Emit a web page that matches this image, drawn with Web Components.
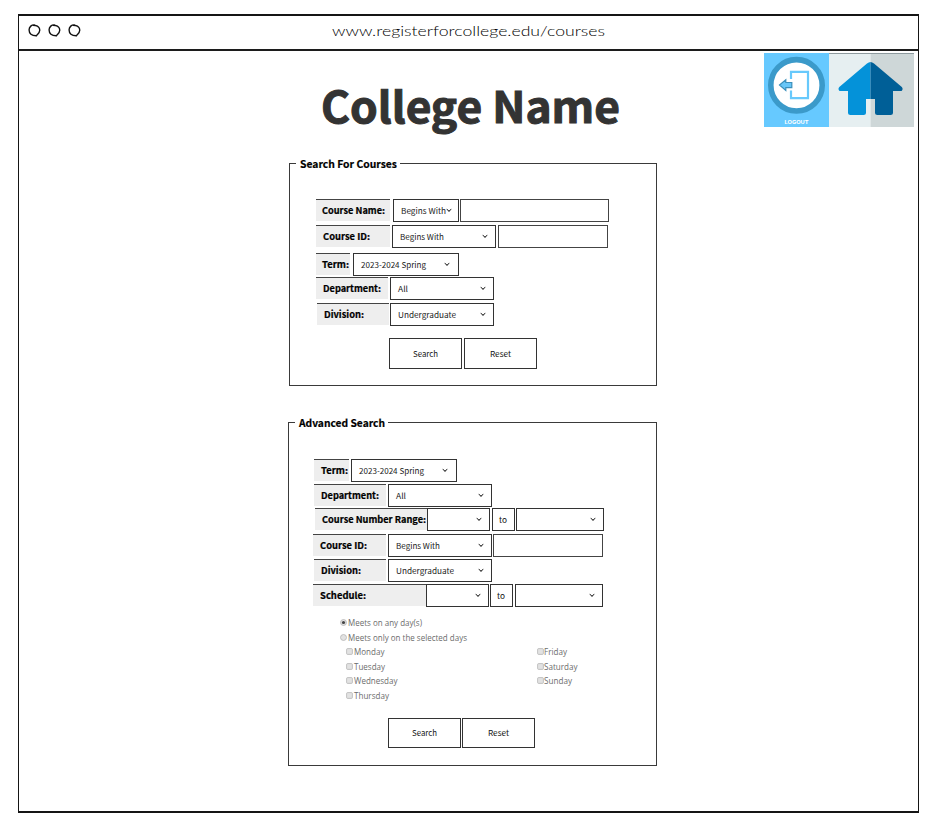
<!DOCTYPE html>
<html lang="en">
<head>
<meta charset="utf-8">
<title>College Name - Courses</title>
<style>
html,body{margin:0;height:100%;background:#fff}
body{font-family:"Noto Sans CJK SC","Source Sans Pro",sans-serif;color:#000;overflow:hidden}
</style>
</head>
<body>
<browser-window url="www.registerforcollege.edu/courses">
  <page-header></page-header>
  <search-panel legend="Search For Courses" lw="97" x="270" y="36" w="368" h="223">
    <form-row y="35" x="26"><field-label w="74" t="Course Name:" tw="63" tx="6"></field-label><select-box gap="3" w="66" t="Begins With" tw="45" cx="53" tx="8"></select-box><text-box gap="1" w="149"></text-box></form-row>
    <form-row y="3" x="26"><field-label w="74" t="Course ID:" tw="47" tx="7"></field-label><select-box gap="2" w="104" t="Begins With" tw="44"></select-box><text-box gap="2" w="110"></text-box></form-row>
    <form-row y="5" x="26"><field-label w="34" t="Term:" tw="27" tx="6"></field-label><select-box gap="3" w="106" t="2023-2024 Spring" tw="65"></select-box></form-row>
    <form-row y="1" x="26"><field-label w="72" t="Department:" tw="58" tx="7"></field-label><select-box gap="2" w="104" t="All" tw="10"></select-box></form-row>
    <form-row y="3" x="27"><field-label w="72" t="Division:" tw="40" tx="6.5"></field-label><select-box gap="1" w="104" t="Undergraduate" tw="58"></select-box></form-row>
    <form-row y="12" x="99"><push-button w="73" h="31" t="Search" tw="25"></push-button><push-button gap="2" w="73" h="31" t="Reset" tw="21"></push-button></form-row>
  </search-panel>
  <search-panel legend="Advanced Search" lw="86" x="269" y="36" w="369" h="344">
    <form-row y="36" x="25"><field-label w="35" t="Term:" tw="27" tx="7"></field-label><select-box gap="2" w="106" t="2023-2024 Spring" tw="65"></select-box></form-row>
    <form-row y="2" x="25"><field-label w="72" t="Department:" tw="58" tx="7"></field-label><select-box gap="2" w="104" t="All" tw="10"></select-box></form-row>
    <form-row y="1" x="26"><field-label w="112" t="Course Number Range:" tw="104" tx="7"></field-label><select-box gap="0" w="63"></select-box><push-button gap="2" w="23" h="23" t="to" tw="8"></push-button><select-box gap="1" w="88"></select-box></form-row>
    <form-row y="3" x="24"><field-label w="73" t="Course ID:" tw="47" tx="7"></field-label><select-box gap="2" w="104" t="Begins With" tw="44"></select-box><text-box gap="1" w="110"></text-box></form-row>
    <form-row y="2" x="25"><field-label w="72" t="Division:" tw="40" tx="7"></field-label><select-box gap="2" w="104" t="Undergraduate" tw="58"></select-box></form-row>
    <form-row y="2" x="24"><field-label w="113" t="Schedule:" tw="46" tx="7"></field-label><select-box gap="0" w="63"></select-box><push-button gap="1" w="23" h="23" t="to" tw="8"></push-button><select-box gap="2" w="88"></select-box></form-row>
    <day-picker></day-picker>
    <form-row y="15" x="99"><push-button w="73" h="30" t="Search" tw="25"></push-button><push-button gap="1" w="73" h="30" t="Reset" tw="21"></push-button></form-row>
  </search-panel>
</browser-window>

<script>
const text = (t, w, o = {}) =>
  `<svg width="${w}" height="${o.h || 12}" style="display:block;overflow:visible;flex:none"><text x="0" y="${o.y || 9}" textLength="${w}" lengthAdjust="spacingAndGlyphs" fill="${o.c || '#000'}" style="font-family:${o.f || 'inherit'};font-size:${o.s || 9}px;font-weight:${o.b || 400};white-space:pre;${o.k ? `stroke:${o.c || '#000'};stroke-width:${o.k}px` : ''}">${t}</text></svg>`;

class Base extends HTMLElement {
  constructor() { super(); this.attachShadow({ mode: 'open' }); }
  a(n, d = 0) { return this.getAttribute(n) ?? d; }
  connectedCallback() { this.shadowRoot.innerHTML = this.view(); }
}
const item = (e, css = '') => `<style>:host{box-sizing:border-box;flex:none;width:${e.a('w')}px;height:${e.a('h', 23)}px;margin-left:${e.a('gap')}px;display:flex;align-items:center;${css}}</style>`;

customElements.define('form-row', class extends Base {
  view() { return `<style>:host{display:flex;align-items:flex-start;margin:${this.a('y')}px 0 0 ${this.a('x')}px}</style><slot></slot>`; }
});
customElements.define('field-label', class extends Base {
  view() { return item(this, `background:#eee;border-top:1px solid #444;padding:0 0 2px ${this.a('tx')}px;height:22px`) + text(this.a('t'), this.a('tw'), { b: 700, s: 9.1, y: 9.6, k: .2 }); }
});
customElements.define('select-box', class extends Base {
  view() {
    const cx = this.a('cx', null) ?? (this.a('w') == 106 ? 94 : this.a('w') - 11);
    return item(this, `border:1px solid #333;padding-left:${this.a('tx', 8) - 1}px`) +
      `<style>.c{margin-left:auto;margin-right:${this.a('w') - cx - 4}px;flex:none}</style>` +
      (this.hasAttribute('t') ? text(this.a('t'), this.a('tw'), { c: '#222', s: 8, y: 9.2 }) : '') +
      `<svg class="c" width="6" height="6"><path d="M.7 1.3Q1.6 1.2 3 3.5Q4.3 1.3 5.3 1.3" fill="none" stroke="#111" stroke-width="1"/></svg>`;
  }
});
customElements.define('text-box', class extends Base {
  view() { return item(this, 'border:1px solid #444;background:#fff'); }
});
customElements.define('push-button', class extends Base {
  view() { return item(this, 'border:1px solid #333;justify-content:center') + `<style>svg{margin-right:1px}</style>` + text(this.a('t'), this.a('tw'), { c: '#111', s: 8.2, y: 9 }); }
});
customElements.define('search-panel', class extends Base {
  view() {
    return `<style>:host{display:block;box-sizing:border-box;width:${this.a('w')}px;height:${this.a('h')}px;margin:${this.a('y')}px 0 0 ${this.a('x')}px;border:1px solid #3a3a3a}
    .l{height:0;display:flex;align-items:center;margin-left:6px}.l div{background:#fff;padding:0 3px 0 4px}</style>
    <div class="l"><div>${text(this.a('legend'), this.a('lw'), { b: 700, s: 10.5, h: 12, y: 10, k: .2 })}</div></div><slot></slot>`;
  }
});
customElements.define('option-mark', class extends Base {
  view() {
    const r = this.a('kind') === 'radio';
    const mark = r
      ? `<circle cx="3.5" cy="3.5" r="3" fill="#e2e2e2" stroke="#b5b5b5" stroke-width=".8"/>${this.hasAttribute('on') ? '<circle cx="3.5" cy="3.5" r="1.6" fill="#444"/>' : ''}`
      : `<rect x=".6" y=".6" width="5.8" height="5.8" rx="1" fill="#e2e2e2" stroke="#b5b5b5" stroke-width=".8"/>`;
    return `<style>:host{display:flex;align-items:center;height:14.5px}.m{flex:none;margin:0 .6px 1px 0}</style><svg class="m" width="7" height="7">${mark}</svg>` +
      text(this.a('t'), this.a('tw'), { f: "'Open Sans'", s: 8.7, c: '#6c6c6c', y: 9.2 });
  }
});
customElements.define('day-picker', class extends Base {
  view() {
    const o = (t, w, k = 'check', on = '') => `<option-mark t="${t}" tw="${w}" kind="${k}" ${on}></option-mark>`;
    return `<style>:host{display:block;margin:9px 0 0 51px;height:87px}.d{display:grid;grid-template-columns:190.5px 1fr;margin-left:6px}</style>
    ${o('Meets on any day(s)', 74, 'radio', 'on')}${o('Meets only on the selected days', 119, 'radio')}
    <div class="d"><div>${o('Monday', 30.5)}${o('Tuesday', 31)}${o('Wednesday', 43.5)}${o('Thursday', 35)}</div><div>${o('Friday', 23)}${o('Saturday', 33.5)}${o('Sunday', 28)}</div></div>`;
  }
});
customElements.define('logout-icon', class extends Base {
  view() {
    return `<style>:host{display:block;width:65px;height:74px}svg{display:block}</style>
    <svg width="65" height="74"><rect width="65" height="74" fill="#66c9ff"/>
    <circle cx="32.5" cy="32.3" r="25.7" fill="#fff" stroke="#3b9aca" stroke-width="5.6"/>
    <path d="M27 26V18.8H44V45.2H27V37.5" fill="none" stroke="#67c9fc" stroke-width="2.2"/>
    <path d="M15.5 32L21.8 26.8V29.5H27.8V34.7H21.8V37.4Z" fill="#67c6f8" stroke="#3b8fbb" stroke-width="1.2"/>
    <text x="20.5" y="70.7" textLength="24" lengthAdjust="spacingAndGlyphs" fill="#fff" style="font:700 5px Inter,sans-serif">LOGOUT</text></svg>`;
  }
});
customElements.define('home-icon', class extends Base {
  view() {
    return `<style>:host{display:block;width:85px;height:74px}svg{display:block}</style>
    <svg width="85" height="74"><rect width="41.5" height="74" fill="#e6eff1"/><rect x="41.5" width="43.5" height="74" fill="#ced7d8"/><rect width="85" height="1" fill="#8d9a9e"/>
    <path d="M41.5 9Q39.8 9 38 10.6L10.3 34Q8.6 36.2 10.5 38H19V59.5Q19 62 21.5 62H34.5Q37 62 37 59.5V46H41.5Z" fill="#0492d9"/>
    <path d="M41.5 9Q43.2 9 45 10.6L72.8 34Q74.5 36.2 72.6 38H64V59.5Q64 62 61.5 62H48.5Q46 62 46 59.5V46H41.5Z" fill="#005f97"/></svg>`;
  }
});
customElements.define('page-header', class extends Base {
  view() {
    return `<style>:host{display:flex;align-items:flex-start;height:76px;box-sizing:border-box}.t{box-sizing:border-box;padding:25px 0 0 302px;width:745px}.i{display:flex;margin-top:2px}</style>
    <div class="t">${text('College Name', 299, { b: 700, s: 42.8, h: 50, y: 46.8, c: '#333', k: 1 })}</div><div class="i"><logout-icon></logout-icon><home-icon></home-icon></div>`;
  }
});
customElements.define('browser-window', class extends Base {
  view() {
    const dot = `<svg width="13" height="13"><path d="M6.8 1C3.8.5 1 2.8 1.1 6C1.1 9.5 3.5 11.8 8.5 11.7C9.2 10.5 11.5 9.5 11.7 6.5C11.9 4.5 10.5 1.8 7.5 1.5L5 1.3" fill="none" stroke="#111" stroke-width="1.4"/></svg>`;
    return `<style>:host{display:block;box-sizing:border-box;width:901px;height:799px;margin:14px 0 0 18px;border:solid #151515;border-width:2px 1.5px 2px 1px;background:#fff}
    header{height:35px;box-sizing:border-box;border-bottom:2px solid #1c1c1c;display:flex;align-items:flex-start}
    .d{display:flex;gap:7px;padding:8px 0 0 9px;width:304px}.d svg{display:block}.u{padding-top:5px}</style>
    <header><div class="d">${dot.repeat(3)}</div><div class="u">${text(this.a('url'), 273, { f: "Lato,'Noto Sans',sans-serif", b: 300, s: 14.5, h: 20, y: 15 })}</div></header><slot></slot>`;
  }
});
</script>
</body>
</html>
